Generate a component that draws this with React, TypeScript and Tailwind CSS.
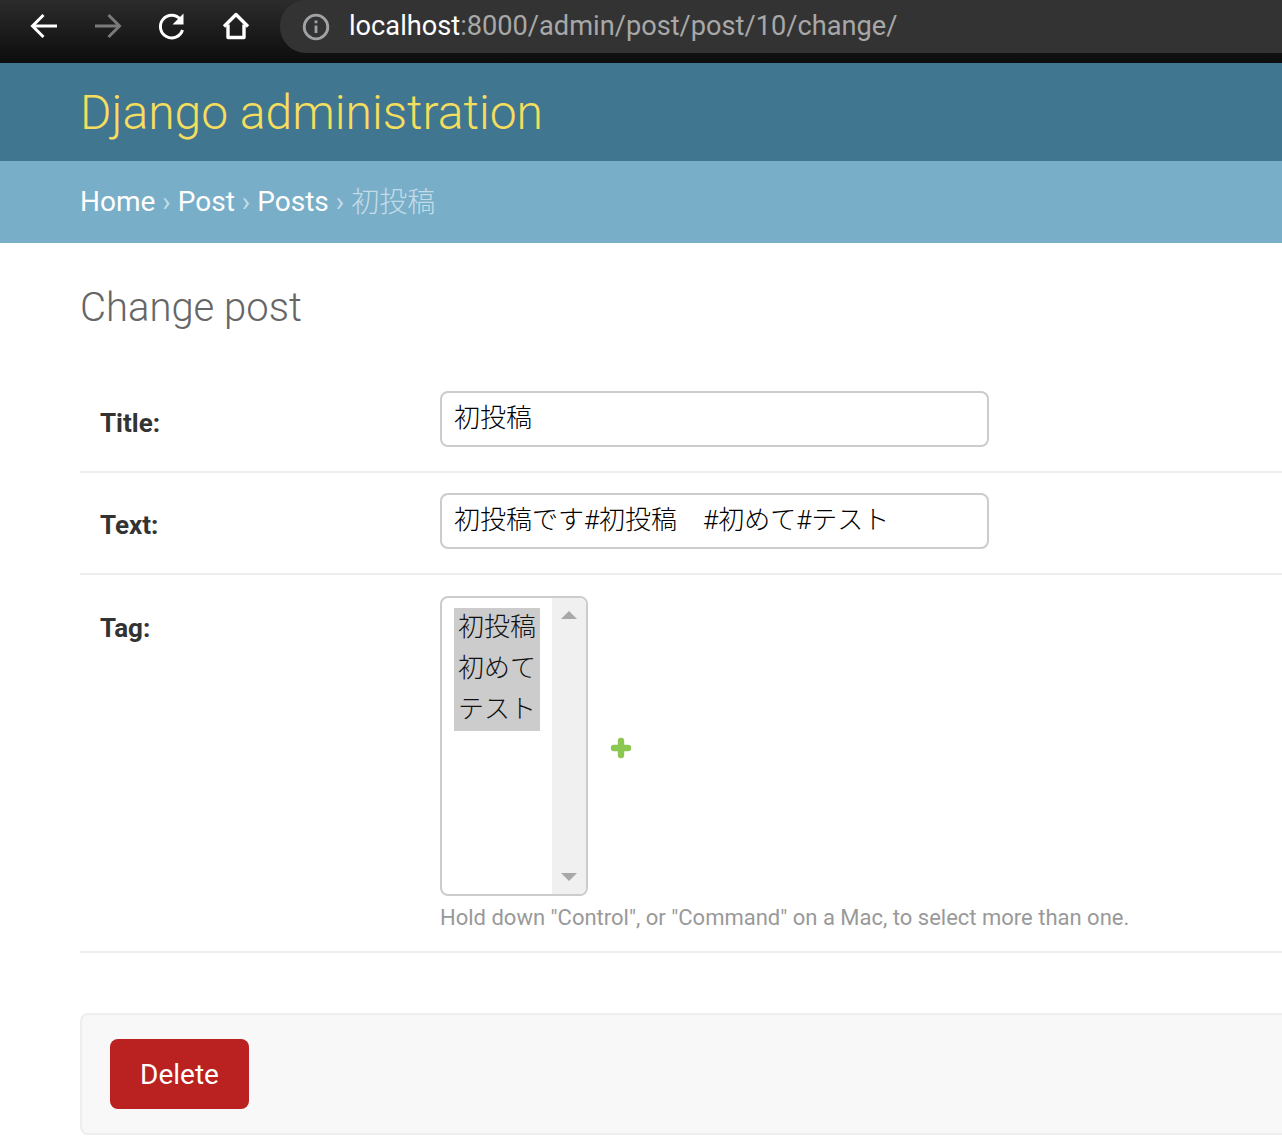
import * as React from "react";

const roboto = "font-['Roboto','Noto_Sans_CJK_JP',sans-serif]";
const cjk = "font-['Noto_Sans_CJK_JP',sans-serif]";

function BrowserBar() {
  return (
    <div className="flex h-[63px] items-start bg-gradient-to-b from-[#2c2c2c] to-[#0d0d0d]">
      <div className="flex h-[53px] w-[280px] shrink-0 items-center">
        <svg className="ml-[28px] mt-[-2px] h-[32px] w-[32px]" viewBox="0 0 32 32" fill="none" stroke="#fff" strokeWidth="3">
          <path d="M29 16H5" />
          <path d="M15.5 5 4.5 16l11 11" />
        </svg>
        <svg className="ml-[32px] mt-[-2px] h-[32px] w-[32px]" viewBox="0 0 32 32" fill="none" stroke="#7a7a7a" strokeWidth="3">
          <path d="M3 16h24" />
          <path d="M16.5 5l11 11-11 11" />
        </svg>
        <svg className="ml-[32px] mt-[-2px] h-[32px] w-[32px]" viewBox="0 0 32 32" fill="none">
          <path d="M24.5 9.5A11.3 11.3 0 1 0 26.5 20" stroke="#fff" strokeWidth="3" />
          <path d="M27.5 3.5v11h-11z" fill="#fff" />
        </svg>
        <svg className="ml-[32px] mt-[-2px] h-[32px] w-[32px]" viewBox="0 0 32 32" fill="none" stroke="#fff" strokeWidth="3.4" strokeLinejoin="round">
          <path d="M4 16.5 16 4.5l12 12" />
          <path d="M8 14.5v13h16v-13" />
        </svg>
      </div>
      <div className="flex h-[53px] flex-1 items-center rounded-l-[26px] bg-[#333333] pl-[22px]">
        <svg className="h-[28px] w-[28px] shrink-0" viewBox="0 0 28 28" fill="none" stroke="#a0a3a6" strokeWidth="2.8">
          <circle cx="14" cy="14" r="11.8" />
          <path d="M14 12.5v7.5M14 7.5v2.8" />
        </svg>
        <div className={`ml-[19px] text-[27.2px] leading-none text-[#a8a8a8] ${roboto}`}>
          <span className="text-white">localhost</span>:8000/admin/post/post/10/change/
        </div>
      </div>
    </div>
  );
}

function FormRow({ label, children, className }: { label: string; children: React.ReactNode; className: string }) {
  return (
    <div className={`flex border-b-2 border-[#eeeeee] ${className}`}>
      <label className="w-[360px] shrink-0 pl-[20px] pt-[16px] text-[26px] font-bold leading-[32px] text-[#333333]">{label}</label>
      <div>{children}</div>
    </div>
  );
}

function TextField({ value }: { value: string }) {
  return (
    <div className={`flex h-[56px] w-[549px] items-center rounded-[8px] border-2 border-[#cccccc] pb-[2px] pl-[12px] text-[26px] font-light text-[#000000] ${roboto}`}>
      {value}
    </div>
  );
}

export default function App() {
  return (
    <div className={`h-[1136px] w-[1282px] overflow-hidden bg-white ${roboto}`}>
      <BrowserBar />
      <div className="flex h-[98px] items-center bg-[#417690] pl-[80px] pt-[2px]">
        <h1 className="text-[48px] font-light leading-none text-[#f5dd5d]">Django administration</h1>
      </div>
      <div className="flex h-[82px] items-center bg-[#79aec8] pl-[80px] text-[28px] text-[#c4dce8]">
        <span className="text-white">Home</span>
        <span className="mx-[7px]">›</span>
        <span className="text-white">Post</span>
        <span className="mx-[7px]">›</span>
        <span className="text-white">Posts</span>
        <span className="mx-[7px]">›</span>
        <span className={`pb-[4px] font-light ${cjk}`}>初投稿</span>
      </div>
      <div className="pl-[80px]">
        <h2 className="mt-[41px] text-[40px] font-light leading-[48px] text-[#666666]">Change post</h2>
        <div className="mt-[39px] w-[1300px]">
          <FormRow label="Title:" className="h-[102px] pt-[20px]">
            <TextField value="初投稿" />
          </FormRow>
          <FormRow label="Text:" className="h-[102px] pt-[20px]">
            <TextField value="初投稿です#初投稿　#初めて#テスト" />
          </FormRow>
          <FormRow label="Tag:" className="h-[378px] pt-[21px]">
            <div className="flex items-center">
              <div className="flex h-[300px] w-[148px] overflow-hidden rounded-[8px] border-2 border-[#cccccc]">
                <div className="flex-1 pl-[12px] pt-[10px]">
                  <div className={`w-[86px] bg-[#cccccc] pl-[4px] text-[26px] font-light text-[#111111] ${cjk}`}>
                    <div className="h-[41px] leading-[33px]">初投稿</div>
                    <div className="h-[41px] leading-[33px]">初めて</div>
                    <div className="h-[41px] leading-[33px]">テスト</div>
                  </div>
                </div>
                <div className="flex w-[34px] flex-col items-center justify-between bg-[#f0f0f0] py-[13px]">
                  <div className="h-0 w-0 border-x-[8px] border-b-[8px] border-x-transparent border-b-[#a8a8a8]" />
                  <div className="h-0 w-0 border-x-[8px] border-t-[8px] border-x-transparent border-t-[#a8a8a8]" />
                </div>
              </div>
              <svg className="ml-[22px] mt-[4px] h-[22px] w-[22px]" viewBox="0 0 22 22">
                <path d="M11 4v14M4 11h14" fill="none" stroke="#8cc751" strokeWidth="6.4" strokeLinecap="round" />
              </svg>
            </div>
            <p className="mt-[8px] text-[22px] leading-[28px] text-[#999999]">
              Hold down "Control", or "Command" on a Mac, to select more than one.
            </p>
          </FormRow>
        </div>
        <div className="mt-[60px] flex h-[122px] w-[1300px] items-center rounded-[8px] border-2 border-[#eeeeee] bg-[#f8f8f8] pl-[28px]">
          <div className="flex h-[70px] w-[139px] items-center justify-center rounded-[8px] bg-[#ba2121] pt-[2px] text-[28px] text-white">
            Delete
          </div>
        </div>
      </div>
    </div>
  );
}
